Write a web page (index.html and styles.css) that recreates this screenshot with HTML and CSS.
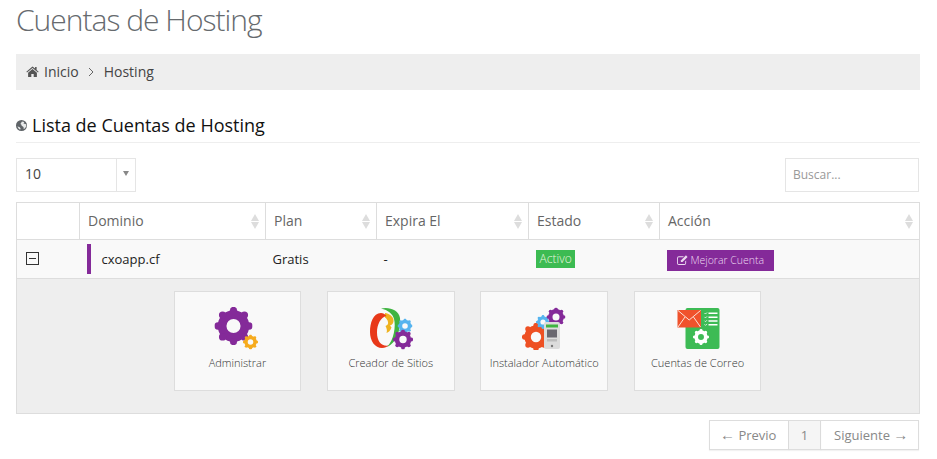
FILE: index.html
```html
<!DOCTYPE html>
<html lang="es">
<head>
<meta charset="utf-8">
<title>Cuentas de Hosting</title>
<link rel="stylesheet" href="styles.css">
</head>
<body>
<svg class="defs" width="0" height="0" aria-hidden="true">
  <symbol id="gear" viewBox="-12 -12 24 24">
    <circle r="7.200" fill="none" stroke="currentColor" stroke-width="5.500"/>
    <g fill="currentColor">
      <circle cx="0" cy="-9.800" r="2.300"/><circle cx="6.900" cy="-6.900" r="2.300"/>
      <circle cx="9.800" cy="0" r="2.300"/><circle cx="6.900" cy="6.900" r="2.300"/>
      <circle cx="0" cy="9.800" r="2.300"/><circle cx="-6.900" cy="6.900" r="2.300"/>
      <circle cx="-9.800" cy="0" r="2.300"/><circle cx="-6.900" cy="-6.900" r="2.300"/>
    </g>
  </symbol>
</svg>
<main class="page">
  <h1 class="title">Cuentas de Hosting</h1>
  <nav class="crumb">
    <svg class="home" viewBox="0 0 14 12"><path d="M7 0.6 0.3 6.2l.7.8L7 2.1 13 7l.7-.8-2.2-1.9V1h-1.7v1.8zM2.2 7.3V12h3.500V8.600h2.600V12h3.500V7.300L7 3.300z"/></svg>
    <span>Inicio</span>
    <svg class="chev" viewBox="0 0 6 10"><path d="M1 1l4 4-4 4" fill="none" stroke="#666" stroke-width="1"/></svg>
    <span>Hosting</span>
  </nav>
  <h2 class="section">
    <svg class="globe" viewBox="0 0 12 12"><circle cx="6" cy="6" r="6" fill="#5f6468"/><path d="M6.500 1.500 9 2.200l-.8 1.600 2.800.7.300 2.300-1.700 2.400-1.200.6-.2-2.300-2-1.100-.4-1.600-1-.5z" fill="#e8eaeb"/><path d="M1.500 7l2.200.5 1.300 1.500-.5 1.600-1.500-1z" fill="#e8eaeb"/></svg>
    Lista de Cuentas de Hosting
  </h2>
  <div class="controls">
    <div class="select"><span class="select-value">10</span><span class="select-arrow"><i></i></span></div>
    <div class="search">Buscar...</div>
  </div>
  <table class="grid">
    <colgroup><col class="c1"><col class="c2"><col class="c3"><col class="c4"><col class="c5"><col class="c6"></colgroup>
    <thead>
      <tr>
        <th></th>
        <th class="sort">Dominio</th>
        <th class="sort">Plan</th>
        <th class="sort">Expira El</th>
        <th class="sort">Estado</th>
        <th class="sort">Acción</th>
      </tr>
    </thead>
    <tbody>
      <tr class="row">
        <td><span class="toggle"></span></td>
        <td><span class="domain">cxoapp.cf</span></td>
        <td>Gratis</td>
        <td>-</td>
        <td><span class="status">Activo</span></td>
        <td class="action"><a class="upgrade"><svg class="edit" viewBox="0 0 12 11"><path d="M2 1.500h5.500L6.500 2.500H2A1 1 0 0 0 1 3.500v5.500a1 1 0 0 0 1 1h6a1 1 0 0 0 1-1V7l1-1v3a2 2 0 0 1-2 2H2a2 2 0 0 1-2-2V3.500a2 2 0 0 1 2-2z"/><path d="M9.800.3l1.800 1.800L6 7.800H4.200V6z"/></svg>Mejorar Cuenta</a></td>
      </tr>
      <tr class="detail">
        <td colspan="6">
          <div class="cards">
            <a class="card">
              <svg class="icon" viewBox="0 0 60 44">
                <use href="#gear" x="7.500" y="1" width="38" height="38" class="purple"/>
                <use href="#gear" x="36" y="28.500" width="15" height="15" class="amber"/>
              </svg>
              <span>Administrar</span>
            </a>
            <a class="card raised">
              <svg class="icon" viewBox="0 0 60 44">
                <path d="M20 2.500C28 0.500 38 4 39 12c.8 9-2 24-13 29 7-7 9-21 7-28-1-5-6-9-13-10.500z" fill="#3fb441"/>
                <path d="M24 7c4 .5 8 3 8.500 7 .3 3-1 4.500-3.500 5.500l1.500 2c-1 3-3 5-5 5.500 1-3 0-5-1-7 2-1 3-2 2.500-4-.3-2-1.500-3.500-3-4.500z" fill="#efb320"/>
                <path d="M20 7C12 7 9 17 9 26c0 9 5 16 12 16 3 0 5-1 6.500-2.500-7 1-11.500-4-11.500-13 0-8 3.500-15 9.500-16.500C24 8 22 7 20 7z" fill="#e8391a"/>
                <use href="#gear" x="36.500" y="12.500" width="15" height="15" class="sky"/>
                <use href="#gear" x="32" y="23.500" width="20" height="20" class="purple"/>
              </svg>
              <span>Creador de Sitios</span>
            </a>
            <a class="card">
              <svg class="icon" viewBox="0 0 60 44">
                <use href="#gear" x="8" y="17" width="28" height="28" class="red"/>
                <use href="#gear" x="22" y="9" width="14" height="14" class="sky"/>
                <use href="#gear" x="32.500" y="1.500" width="19" height="19" class="purple"/>
                <rect x="30" y="16" width="16" height="27" rx="2" fill="#dcdcdc"/>
                <rect x="32" y="18.500" width="12" height="3" fill="#3fb441"/>
                <rect x="33" y="23.500" width="10" height="8" fill="#6a6870"/>
                <rect x="33" y="33" width="10" height="2.500" fill="#bdbdbd"/>
                <circle cx="38" cy="40" r="1.200" fill="#777"/>
              </svg>
              <span>Instalador Automático</span>
            </a>
            <a class="card">
              <svg class="icon" viewBox="0 0 60 44">
                <rect x="17.500" y="2" width="34" height="41" rx="2" fill="#3dbb55"/>
                <rect x="9.500" y="4" width="23.500" height="17.500" fill="#f0522c"/>
                <path d="M10 4.500 21.200 14 32.500 4.500M10 21 17 11M32.500 21 25.500 11" fill="none" stroke="#fbe3da" stroke-width="1"/>
                <path d="M40.500 7.300h9M40.500 11.200h9M40.500 15h9M40.500 18.700h9" stroke="#fff" stroke-width="1.400"/>
                <path d="M36.500 7l1 1 1.500-1.500M36.500 10.900l1 1 1.500-1.500M36.500 14.700l1 1 1.500-1.500M36.500 18.400l1 1 1.500-1.500" fill="none" stroke="#fff" stroke-width=".8"/>
                <use href="#gear" x="25" y="23" width="16" height="16" class="white"/>
              </svg>
              <span>Cuentas de Correo</span>
            </a>
          </div>
        </td>
      </tr>
    </tbody>
  </table>
  <div class="pager">
    <a class="prev"><span class="arrow">←</span> Previo</a><a class="current">1</a><a class="next">Siguiente <span class="arrow">→</span></a>
  </div>
</main>
</body>
</html>
```

FILE: styles.css
```css
* { box-sizing: border-box; }
html, body { margin: 0; height: 459px; overflow: hidden; background: #fff; }
body { font-family: "Open Sans", sans-serif; color: #333; }
.defs { position: absolute; }
.page { padding: 0 17px 0 16px; }
.title { margin: 0; height: 54px; font-size: 30px; letter-spacing: -1px; line-height: 40px; font-weight: 300; color: #666a6e; }
.crumb { display: flex; align-items: center; height: 36px; padding-left: 10px; padding-bottom: 1px; background: #eee; font-size: 14px; color: #444; }
.home { width: 13px; height: 11px; margin-right: 5px; fill: #555; }
.chev { width: 6px; height: 10px; margin: 1px 10px 0 9px; }
.section { display: flex; align-items: center; gap: 5px; height: 35px; margin: 18px 0 15px; border-bottom: 1px solid #eee; font-size: 18px; font-weight: 400; color: #111; line-height: 24px; padding-bottom: 1px; white-space: nowrap; }
.globe { width: 11px; height: 11px; margin-top: 2px; }
.controls { display: flex; justify-content: space-between; height: 34px; margin-bottom: 10px; padding-right: 1px; }
.select { display: flex; width: 120px; border: 1px solid #e5e5e5; font-size: 14px; color: #444; }
.select-value { flex: 1; padding-left: 8px; line-height: 30px; }
.select-arrow { display: flex; align-items: center; justify-content: center; width: 19px; border-left: 1px solid #e5e5e5; padding-bottom: 4px; }
.select-arrow i { border: 3px solid transparent; border-top: 5px solid #888; border-bottom: 0; }
.search { width: 134px; border: 1px solid #e5e5e5; padding-left: 7px; font-size: 12px; line-height: 31px; color: #999; }
.grid { width: 903px; table-layout: fixed; border-collapse: collapse; border: 1px solid #ddd; font-size: 13px; }
.c1 { width: 63px; } .c2 { width: 186px; } .c3 { width: 111px; } .c4 { width: 152px; } .c5 { width: 131px; } .c6 { width: 260px; }
th { position: relative; height: 37px; padding: 0 8px 1px; border: 1px solid #ddd; text-align: left; font-size: 14px; font-weight: 400; color: #666; }
.sort::before, .sort::after { content: ""; position: absolute; right: 6px; border: 4px solid transparent; }
.sort::before { top: 11px; border-top: 0; border-bottom: 7px solid #ddd; }
.sort::after { top: 19px; border-bottom: 0; border-top: 7px solid #ddd; }
.row td { height: 39px; padding: 0 7px 1px; background: #f9f9f9; border-bottom: 1px solid #ddd; color: #222; }
.row td:first-child { padding-left: 9px; }
.row .action { padding-top: 2px; padding-bottom: 0; }
.toggle { position: relative; display: block; width: 13px; height: 13px; border: 1px solid #333; }
.toggle::after { content: ""; position: absolute; left: 2px; right: 2px; top: 5px; height: 1px; background: #333; }
.domain { display: flex; align-items: center; height: 30px; border-left: 4px solid #842a99; padding-left: 11px; }
.status { display: inline-block; padding: 0 3px 0 4px; height: 18px; line-height: 18px; background: #3cbb52; color: #e4f5de; font-size: 12px; font-weight: 300; }
.upgrade { display: inline-flex; align-items: center; height: 21px; padding: 0 10px; background: #842a99; color: #ecd9f0; font-size: 10.500px; font-weight: 300; white-space: nowrap; }
.edit { width: 11px; height: 10px; margin-right: 3px; fill: #ecd9f0; }
.detail td { height: 135px; padding: 12px 0 22px; background: #eee; }
.cards { display: flex; justify-content: center; gap: 25.800px; padding-right: 1px; }
.card { display: flex; flex-direction: column; align-items: center; width: 127.600px; height: 100px; padding-top: 14px; background: #f9f9f9; border: 1px solid #ddd; font-size: 11px; font-weight: 300; color: #333; white-space: nowrap; }
.icon { display: block; width: 60px; height: 44px; margin-bottom: 5px; }
.purple { color: #842a99; }
.amber { color: #f6ab1e; }
.sky { color: #56b4ef; }
.red { color: #ee5023; }
.white { color: #fff; }
.pager { display: flex; justify-content: flex-end; height: 30px; margin-top: 6px; padding-right: 1px; font-size: 13px; color: #888; }
.pager a { display: block; line-height: 28px; border: 1px solid #ddd; border-left-width: 0; box-shadow: 0 1px 1px rgba(0,0,0,.05); white-space: nowrap; }
.pager .prev { width: 80px; padding-left: 10px; border-left-width: 1px; }
.pager .current { width: 32px; background: #f5f5f5; text-align: center; }
.pager .next { width: 98px; padding-left: 13px; }
.arrow { font-family: "Liberation Sans", sans-serif; font-size: 15px; line-height: 1; }
```
